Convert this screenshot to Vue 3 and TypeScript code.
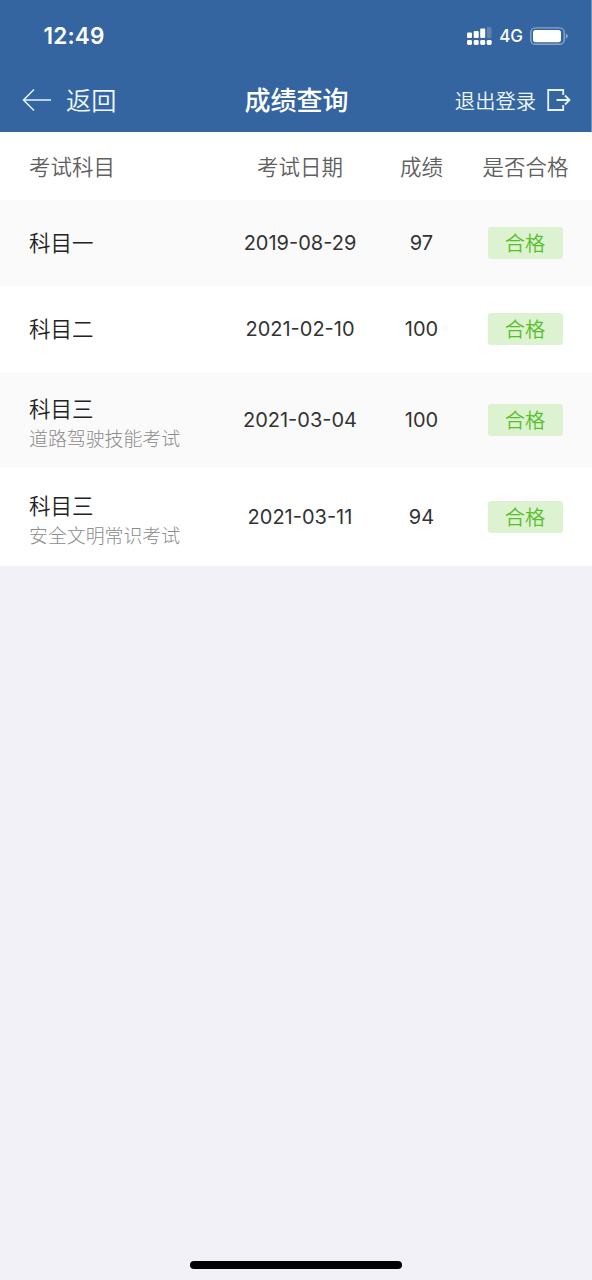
<script setup lang="ts">
interface ExamResult {
  subject: string
  detail?: string
  date: string
  score: number
  status: string
}

const columns: string[] = ['考试科目', '考试日期', '成绩', '是否合格']

const results: ExamResult[] = [
  { subject: '科目一', date: '2019-08-29', score: 97, status: '合格' },
  { subject: '科目二', date: '2021-02-10', score: 100, status: '合格' },
  { subject: '科目三', detail: '道路驾驶技能考试', date: '2021-03-04', score: 100, status: '合格' },
  { subject: '科目三', detail: '安全文明常识考试', date: '2021-03-11', score: 94, status: '合格' },
]
</script>

<template>
  <div class="screen">
    <header class="top">
      <div class="status-bar">
        <span class="clock">12:49</span>
        <div class="indicators">
          <svg class="signal" width="25" height="19" viewBox="0 0 25 19" fill="#fff">
            <rect x="0" y="5.5" width="5" height="5.5" rx="1" />
            <rect x="6.7" y="4" width="5" height="7" rx="1" />
            <rect x="13.2" y="1.5" width="5" height="9.5" rx="1" />
            <rect x="19.8" y="0" width="4.6" height="11" rx="1" opacity="0.2" />
            <rect x="0" y="13" width="5" height="5" rx="1.4" />
            <rect x="6.7" y="13" width="5" height="5" rx="1.4" />
            <rect x="13.2" y="13" width="5" height="5" rx="1.4" />
            <rect x="19.7" y="13" width="5" height="5" rx="1.4" />
          </svg>
          <span class="network">4G</span>
          <svg class="battery" width="38" height="19" viewBox="0 0 38 19">
            <rect x="0.8" y="0.9" width="33.4" height="16.4" rx="4.6" fill="none" stroke="#fff" stroke-opacity="0.42" stroke-width="1.4" />
            <rect x="3" y="3" width="28" height="12.2" rx="2.6" fill="#fff" />
            <path d="M35.8 6.4c1.2.4 2 1.5 2 2.7s-.8 2.3-2 2.7z" fill="#fff" fill-opacity="0.45" />
          </svg>
        </div>
      </div>
      <nav class="nav">
        <div class="back">
          <svg width="30" height="24" viewBox="0 0 30 24" fill="none" stroke="#e6f3ff" stroke-width="1.5">
            <path d="M29 12H1.5M12 1.5L1.5 12L12 22.5" />
          </svg>
          <span>返回</span>
        </div>
        <h1 class="title">成绩查询</h1>
        <div class="logout">
          <span>退出登录</span>
          <svg width="24" height="24" viewBox="0 0 24 24" fill="none" stroke="#e6f3ff" stroke-width="1.8">
            <path d="M16.2 7V2H1.2V22H16.2V17" />
            <path d="M9.5 12H22.5M18 7.5L22.5 12L18 16.5" />
          </svg>
        </div>
      </nav>
    </header>

    <main class="table">
      <div class="row head">
        <span v-for="name in columns" :key="name">{{ name }}</span>
      </div>
      <div
        v-for="item in results"
        :key="item.date"
        class="row"
        :class="{ detailed: item.detail }"
      >
        <div class="subject">
          <span>{{ item.subject }}</span>
          <span v-if="item.detail" class="detail">{{ item.detail }}</span>
        </div>
        <span class="number">{{ item.date }}</span>
        <span class="number">{{ item.score }}</span>
        <span class="badge">{{ item.status }}</span>
      </div>
    </main>

    <footer class="home"><div class="home-bar"></div></footer>
  </div>
</template>

<style>
body {
  margin: 0;
  background: #f2f1f7;
}
</style>

<style scoped>
.screen {
  display: flex;
  flex-direction: column;
  width: 592px;
  height: 1280px;
  box-sizing: border-box;
  overflow: hidden;
  background: #f2f1f7;
  font-family: Inter, "Noto Sans CJK SC", sans-serif;
}

.top {
  height: 131.5px;
  flex: none;
  color: #fff;
  background: #3565a0;
  box-shadow: inset -1px 0 #7195c0;
}

.status-bar {
  display: flex;
  align-items: center;
  justify-content: space-between;
  height: 71px;
  box-sizing: border-box;
  padding: 0 24px 0 43.5px;
}

.clock {
  font-size: 22.5px;
  font-weight: 600;
  letter-spacing: 0.2px;
}

.indicators {
  display: flex;
  align-items: center;
  padding-top: 1px;
}

.network {
  margin: 0 7px;
  font-size: 17px;
  font-weight: 500;
}

.nav {
  display: grid;
  grid-template-columns: 1fr auto 1fr;
  align-items: center;
  height: 58px;
  padding: 0 21px 0 22px;
}

.back,
.logout {
  display: flex;
  align-items: center;
  color: #eef8ff;
  font-weight: 350;
}

.back {
  gap: 14px;
  font-size: 25.2px;
}

.back span {
  padding-bottom: 3px;
}

.logout span {
  padding-bottom: 1px;
}

.title {
  margin: 0;
  padding-bottom: 3px;
  font-size: 26px;
  font-weight: 500;
}

.logout {
  justify-content: flex-end;
  gap: 11px;
  font-size: 20.3px;
}

.table {
  flex: none;
  background: #fff;
}

.row {
  display: grid;
  grid-template-columns: 197px 148px 95px 113px;
  align-items: center;
  justify-items: center;
  height: 86px;
  padding-left: 29px;
  color: #333;
  font-size: 21.5px;
}

.row > :first-child {
  justify-self: start;
}

.row.head {
  height: 68.5px;
  color: #606060;
  font-weight: 350;
}

.row:nth-child(even) {
  background: #fafafa;
}

.row.detailed {
  height: 96px;
}

.row.detailed:last-child {
  height: 98px;
}

.subject {
  display: flex;
  flex-direction: column;
  color: #222;
  font-weight: 350;
  line-height: 32px;
}

.detailed .subject {
  padding-top: 6px;
}

.detail {
  color: #8c8c8c;
  font-size: 18.9px;
  font-weight: 300;
  line-height: 29px;
}

.number {
  padding-bottom: 1px;
  font-size: 20px;
}

.badge {
  width: 75px;
  height: 32px;
  box-sizing: border-box;
  padding: 1px 1px 0 0;
  border-radius: 3px;
  color: #58bf2c;
  background: #ddf2d1;
  font-size: 20.2px;
  font-weight: 350;
  line-height: 32px;
  text-align: center;
}

.home {
  display: flex;
  flex: 1;
  align-items: flex-end;
  justify-content: center;
  padding-bottom: 11px;
}

.home-bar {
  width: 212px;
  height: 8px;
  border-radius: 4px;
  background: #000;
}
</style>
